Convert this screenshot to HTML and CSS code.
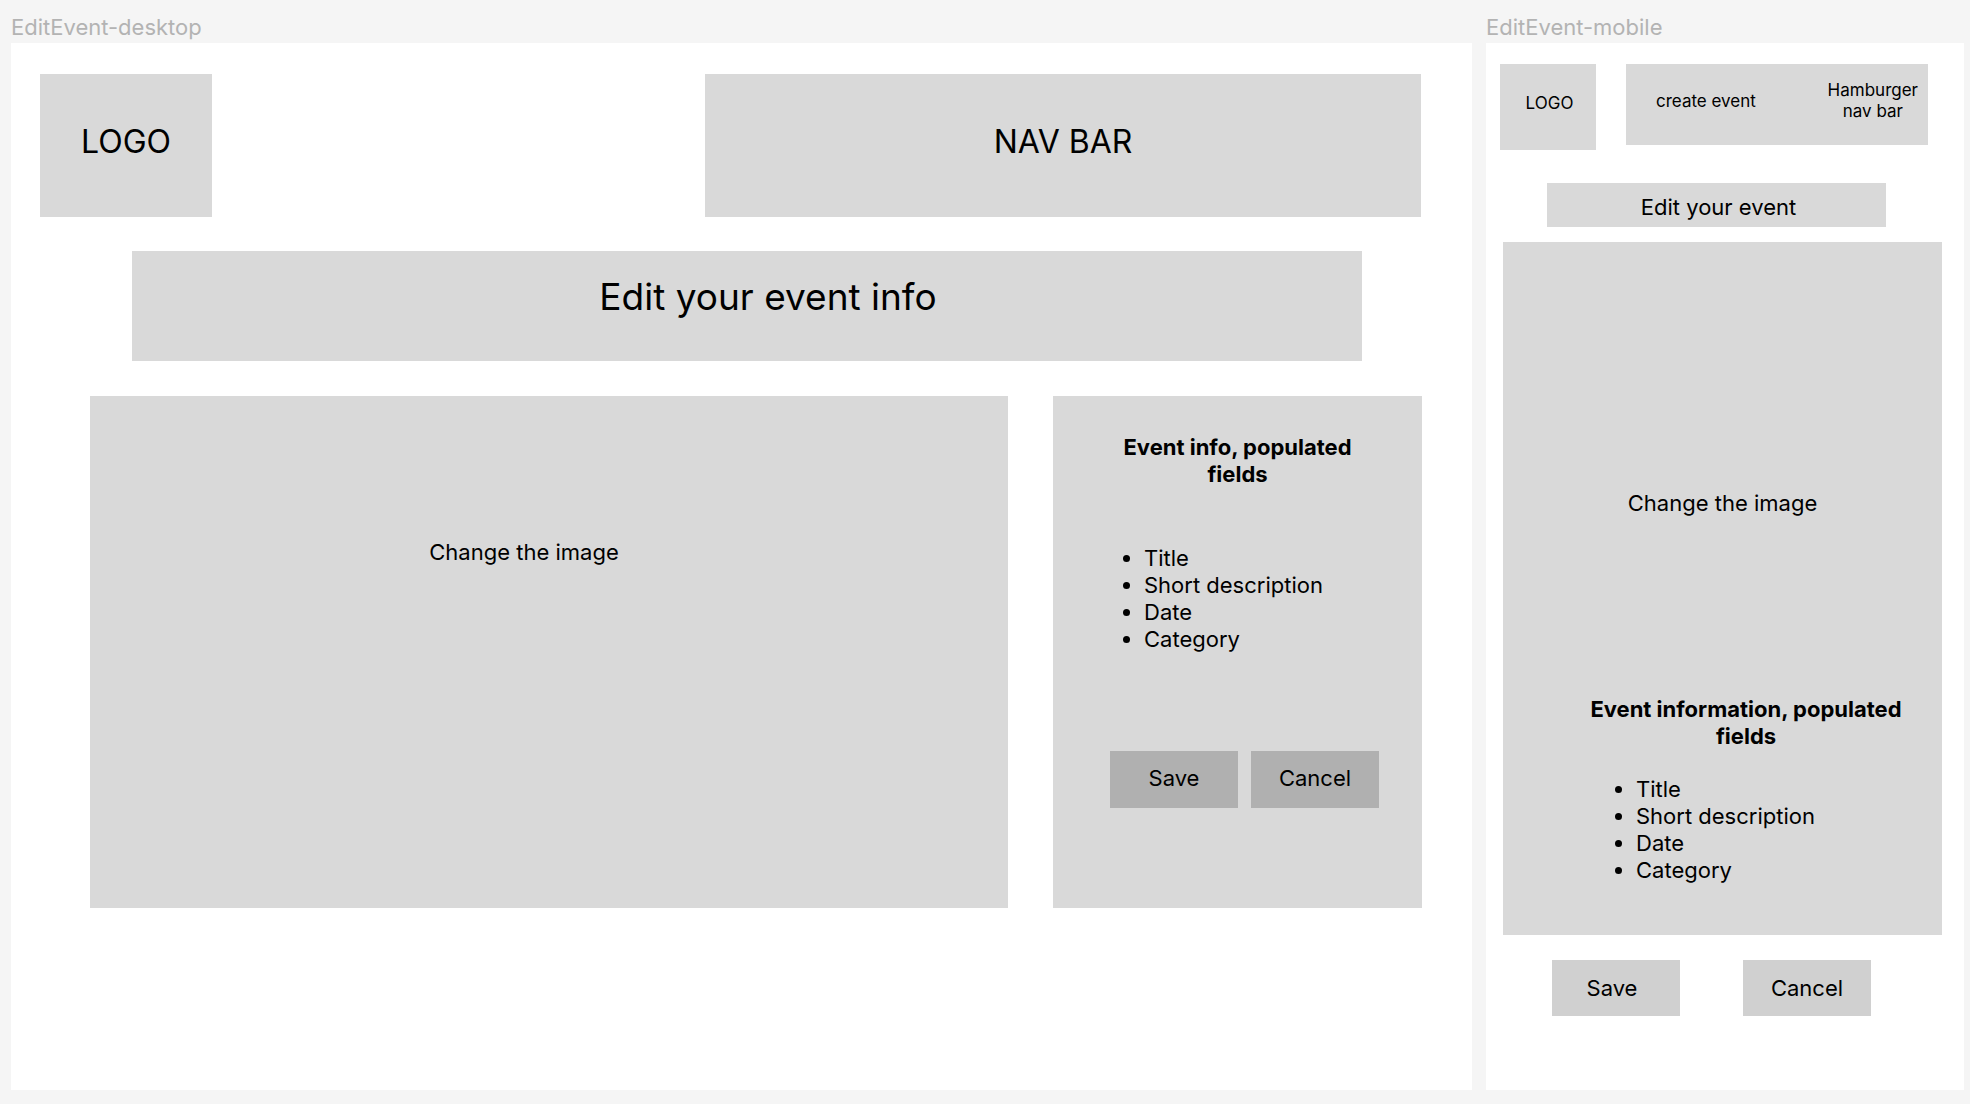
FILE: index.html
```html
<!DOCTYPE html>
<html lang="en">
<head>
<meta charset="utf-8">
<title>EditEvent wireframes</title>
<link rel="stylesheet" href="styles.css">
</head>
<body>
<div class="canvas">
  <section class="frame frame-desktop">
    <div class="frame-label">EditEvent-desktop</div>
    <div class="board board-desktop">
      <header class="d-header">
        <div class="ph d-logo">LOGO</div>
        <nav class="ph d-nav">NAV BAR</nav>
      </header>
      <h1 class="ph d-title">Edit your event info</h1>
      <div class="d-main">
        <div class="ph d-image">Change the image</div>
        <div class="ph d-info">
          <h2 class="info-heading d-heading">Event info, populated fields</h2>
          <ul class="field-list d-list">
            <li>Title</li>
            <li>Short description</li>
            <li>Date</li>
            <li>Category</li>
          </ul>
          <div class="actions d-actions">
            <button class="btn d-btn" type="button">Save</button>
            <button class="btn d-btn" type="button">Cancel</button>
          </div>
        </div>
      </div>
    </div>
  </section>

  <section class="frame frame-mobile">
    <div class="frame-label">EditEvent-mobile</div>
    <div class="board board-mobile">
      <header class="m-header">
        <div class="ph m-logo">LOGO</div>
        <nav class="ph m-nav">
          <span class="m-create">create event</span>
          <span class="m-burger">Hamburger<br>nav bar</span>
        </nav>
      </header>
      <h1 class="ph m-title">Edit your event</h1>
      <div class="ph m-card">
        <p class="m-image">Change the image</p>
        <h2 class="info-heading m-heading">Event information, populated fields</h2>
        <ul class="field-list m-list">
          <li>Title</li>
          <li>Short description</li>
          <li>Date</li>
          <li>Category</li>
        </ul>
      </div>
      <div class="actions m-actions">
        <button class="btn m-btn m-btn-save" type="button">Save</button>
        <button class="btn m-btn" type="button">Cancel</button>
      </div>
    </div>
  </section>
</div>
</body>
</html>
```
FILE: styles.css
```css
* { box-sizing: border-box; }

body {
  margin: 0;
  background: #f5f5f5;
  font-family: Inter, "Noto Sans", sans-serif;
  color: #000;
}

.canvas {
  display: flex;
  gap: 14px;
  padding-left: 11px;
}

.frame-label {
  height: 43px;
  padding-top: 14px;
  font-size: 22px;
  line-height: 27px;
  color: #b3b3b3;
}

.board {
  background: #fff;
  height: 1047px;
}

.ph { background: #d9d9d9; }

/* ---------- desktop ---------- */
.board-desktop {
  width: 1461px;
  padding-top: 31px;
}

.d-header {
  display: flex;
  justify-content: space-between;
  padding: 0 51px 0 29px;
}

.d-logo,
.d-nav {
  height: 143px;
  display: flex;
  align-items: center;
  justify-content: center;
  padding-bottom: 9px;
  font-size: 32px;
  font-weight: 400;
}

.d-logo { width: 172px; }
.d-nav { width: 716px; }

.d-title {
  margin: 34px 0 0 121px;
  width: 1230px;
  height: 110px;
  display: flex;
  align-items: center;
  justify-content: center;
  padding: 0 0 19px 42px;
  font-size: 37px;
  font-weight: 400;
}

.d-main {
  display: flex;
  gap: 45px;
  margin-top: 35px;
  padding-left: 79px;
}

.d-image {
  width: 918px;
  height: 512px;
  padding: 143px 50px 0 0;
  text-align: center;
  font-size: 22px;
  line-height: 27px;
}

.d-info {
  width: 369px;
  height: 512px;
  padding-top: 38px;
}

.info-heading {
  margin: 0;
  font-size: 22px;
  line-height: 27px;
  font-weight: 700;
  text-align: center;
}

.d-heading {
  width: 250px;
  margin: 0 auto;
}

.field-list {
  margin: 0;
  list-style: disc;
  font-size: 22px;
  line-height: 27px;
}

.d-list {
  margin-top: 57px;
  padding-left: 91px;
}

.actions { display: flex; }

.btn {
  border: none;
  padding: 0;
  font-family: inherit;
  font-size: 22px;
  color: #000;
}

.d-actions {
  margin-top: 98px;
  padding-left: 57px;
  gap: 13px;
}

.d-btn {
  width: 128px;
  height: 57px;
  padding-bottom: 4px;
  background: #b0b0b0;
}

/* ---------- mobile ---------- */
.board-mobile {
  width: 478px;
  padding-top: 21px;
}

.m-header {
  display: flex;
  align-items: flex-start;
  gap: 30px;
  padding-left: 14px;
  font-size: 17px;
  line-height: 21px;
}

.m-logo {
  width: 96px;
  height: 86px;
  display: flex;
  align-items: center;
  justify-content: center;
  padding: 0 0 7px 3px;
}

.m-nav {
  width: 302px;
  height: 81px;
  display: flex;
  align-items: center;
  justify-content: space-between;
  padding: 0 10px 7px 30px;
}

.m-burger { text-align: center; }

.m-title {
  margin: 33px 0 0 61px;
  width: 339px;
  height: 44px;
  display: flex;
  align-items: center;
  justify-content: center;
  padding: 4px 0 0 4px;
  font-size: 22px;
  font-weight: 400;
}

.m-card {
  margin: 15px 0 0 17px;
  width: 439px;
  height: 693px;
  padding-top: 248px;
}

.m-image {
  margin: 0;
  text-align: center;
  font-size: 22px;
  line-height: 27px;
}

.m-heading {
  width: 340px;
  margin: 179px 0 0 73px;
}

.m-list {
  margin-top: 26px;
  padding-left: 133px;
}

.m-actions {
  margin-top: 25px;
  padding-left: 66px;
  gap: 63px;
}

.m-btn {
  width: 128px;
  height: 56px;
  background: #d0d0d0;
}

.m-btn-save { padding-right: 8px; }
```
